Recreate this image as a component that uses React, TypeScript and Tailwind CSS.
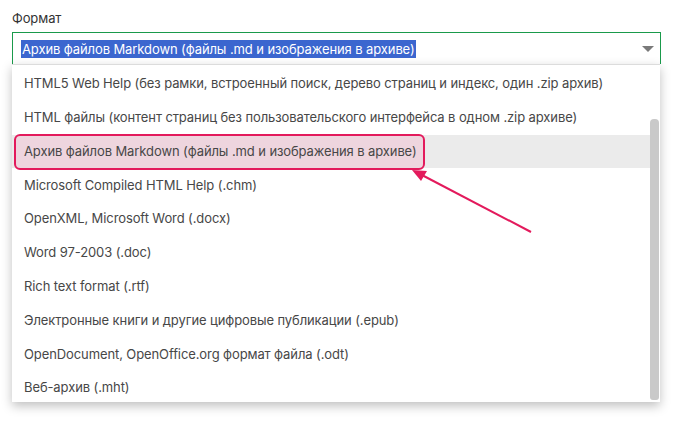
import React from "react";

const formats = [
  "HTML5 Web Help (без рамки, встроенный поиск, дерево страниц и индекс, один .zip архив)",
  "HTML файлы (контент страниц без пользовательского интерфейса в одном .zip архиве)",
  "Архив файлов Markdown (файлы .md и изображения в архиве)",
  "Microsoft Compiled HTML Help (.chm)",
  "OpenXML, Microsoft Word (.docx)",
  "Word 97-2003 (.doc)",
  "Rich text format (.rtf)",
  "Электронные книги и другие цифровые публикации (.epub)",
  "OpenDocument, OpenOffice.org формат файла (.odt)",
  "Веб-архив (.mht)",
];

const selectedIndex = 2;

export default function App() {
  return (
    <div
      className="relative w-[675px] h-[426px] bg-white px-3 pt-[8px] text-[13px] tracking-[-0.1px] text-[#474747]"
      style={{ fontFamily: "Inter, 'Open Sans', sans-serif" }}
    >
      <div className="h-[20px] leading-[20px] text-[#333]">Формат</div>

      <div className="mt-[4px] w-[649px]">
        <div className="h-[32px] border border-b-0 border-[#1a9a4b] flex items-center pl-[8px] pr-[6px]">
          <span className="bg-[#3b66cf] text-white leading-[18px] px-[1px]">
            {formats[selectedIndex]}
          </span>
          <span className="ml-auto w-0 h-0 border-l-[6px] border-r-[6px] border-t-[6px] border-l-transparent border-r-transparent border-t-[#7a7a7a]" />
        </div>

        <div className="h-[338px] w-[648px] bg-white border-t border-[#dcdcdc] shadow-[0_4px_10px_rgba(0,0,0,0.25)] flex overflow-hidden">
          <ul className="flex-1 pt-[2px]">
            {formats.map((f, i) => (
              <li
                key={f}
                className={
                  i === selectedIndex
                    ? "h-[33.8px] bg-[#ebebeb] flex items-center pl-[2px]"
                    : "h-[33.8px] flex items-center pl-3"
                }
              >
                {i === selectedIndex ? (
                  <span className="h-[36px] flex items-center pl-[8px] pr-[6px] rounded-[6px] border-2 border-[#e31a5c] bg-[#eed5de] whitespace-nowrap">
                    {f}
                  </span>
                ) : (
                  <span className="whitespace-nowrap">{f}</span>
                )}
              </li>
            ))}
          </ul>
          <div className="w-[9px] pt-[54px] pb-[2px] mr-[1px]">
            <div className="h-full bg-[#c9c9c9] rounded-t-[4px] rounded-b-[3px]" />
          </div>
        </div>
      </div>

      <svg
        className="absolute left-0 top-0 pointer-events-none"
        width="675"
        height="426"
        viewBox="0 0 675 426"
      >
        <line x1="531" y1="232" x2="420" y2="174" stroke="#e31a5c" strokeWidth="2" />
        <polygon points="412,170 427,171 421,181" fill="#e31a5c" />
      </svg>
    </div>
  );
}
